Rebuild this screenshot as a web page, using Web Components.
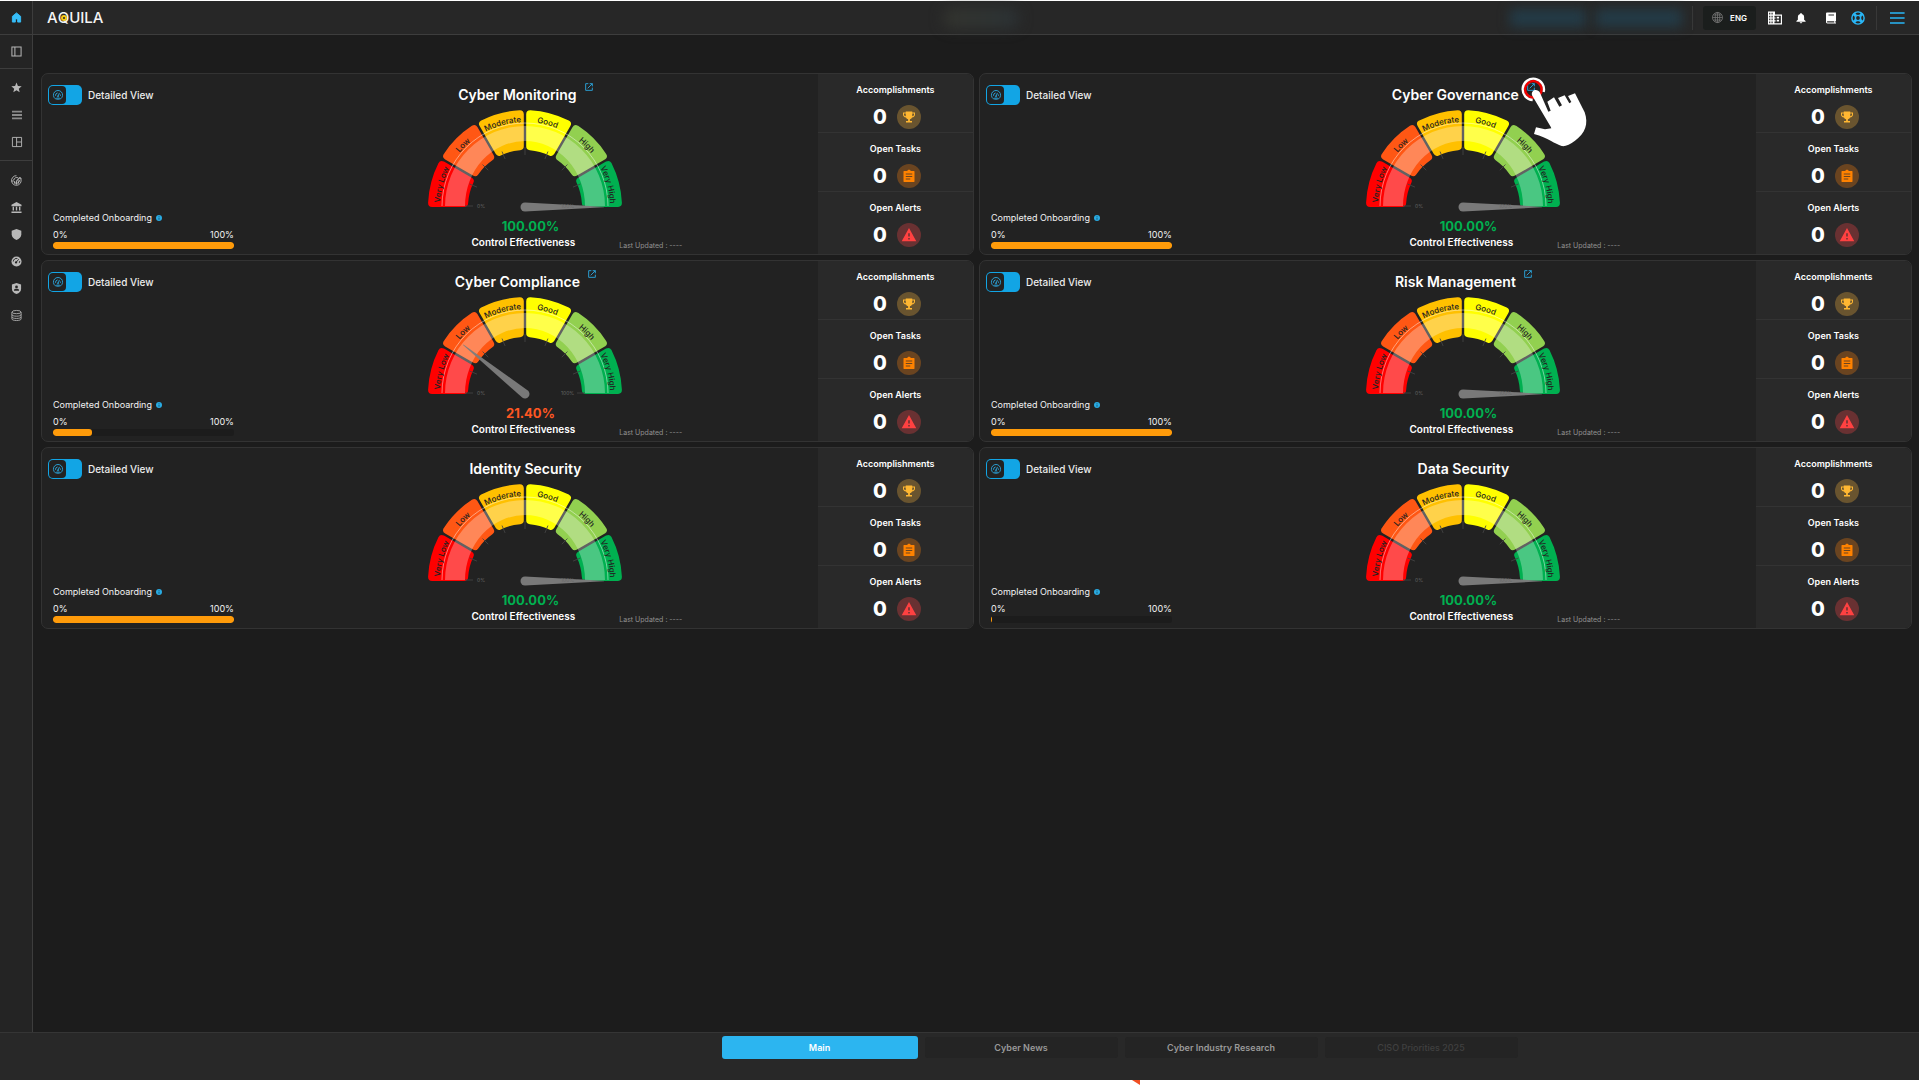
<!DOCTYPE html>
<html lang="en">
<head>
<meta charset="utf-8">
<title>Aquila</title>
<style>
html{background:#fff}
body{margin:0;padding:1px 0 5px;box-sizing:border-box;height:100vh;display:flex;flex-direction:column;font-family:Inter,"Open Sans",sans-serif;color:#fff;overflow:hidden;position:relative}
.shell{flex:1;display:flex;min-height:0;background:#1c1c1c}
.page{flex:1;display:flex;flex-direction:column;min-width:0}
main{flex:1;display:grid;grid-template-columns:1fr 1fr;gap:5px;align-content:start;padding:38px 7px 0 8px}
</style>
</head>
<body>
<div class="shell">
  <app-sidebar></app-sidebar>
  <div class="page">
    <app-header></app-header>
    <main>
      <score-card name="Cyber Monitoring" score="100" onboarding="100" link></score-card>
      <score-card name="Cyber Governance" score="100" onboarding="100" link><pointer-hand slot="pointer"></pointer-hand></score-card>
      <score-card name="Cyber Compliance" score="21.4" onboarding="21.4" link></score-card>
      <score-card name="Risk Management" score="100" onboarding="100" link></score-card>
      <score-card name="Identity Security" score="100" onboarding="100"></score-card>
      <score-card name="Data Security" score="100" onboarding="0.4"></score-card>
    </main>
  </div>
</div>
<tab-bar></tab-bar>
<script>
const ICONS = {
  home: '<path fill="currentColor" d="M12 2 3 9.500V22h6.500v-7h5v7H21V9.500z" stroke="currentColor" stroke-width="2" stroke-linejoin="round"/>',
  panel: '<path fill="none" stroke="currentColor" stroke-width="2.200" d="M2 2h20v20H2zM8.500 2v20"/>',
  star: '<path fill="currentColor" d="m12 1 3.100 7.600 8.200.6-6.300 5.300 2 8L12 18.100 5 22.500l2-8L.7 9.200l8.200-.6z"/>',
  rows: '<path stroke="currentColor" stroke-width="4.500" d="M0 4h24M0 12h24M0 20h24"/>',
  layout: '<path fill="none" stroke="currentColor" stroke-width="2.200" d="M1 1h22v22H1zM11 1v22M11 12h11"/>',
  radar: '<g fill="none" stroke="currentColor" stroke-width="2"><path d="M19 4.500A10.500 10.500 0 1 1 12 1.500M2 15l4-5M22.300 9a10.500 10.500 0 0 0-1.500-3M16 6.500a6.500 6.500 0 0 0-10 4.500M18.500 11a6.500 6.500 0 0 1-12.500 3"/><path d="m12 13 8-8" stroke-width="2.500"/><path d="M8 13v6M12 13v8M16 12v7"/></g>',
  bank: '<path fill="currentColor" d="M12 0 1 6v3h22V6zM3.500 10.500h3v8h-3zM10.500 10.500h3v8h-3zM17.500 10.500h3v8h-3zM1 20.500h22V24H1z"/>',
  shield: '<path fill="currentColor" d="M12 0 1.500 4v8c0 5.500 4.500 10 10.500 12 6-2 10.500-6.500 10.500-12V4z"/>',
  speed: '<circle cx="12" cy="12" r="11" fill="currentColor"/><path fill="none" stroke="#242424" stroke-width="2" d="M5 12a7 7 0 0 1 9-6.500M19 11a7 7 0 0 1-1 4M11 14l6-7"/><circle cx="11" cy="14" r="2.500" fill="#242424"/>',
  badge: '<path fill="currentColor" d="M12 0 2 3.500V13c0 5 4 9 10 11 6-2 10-6 10-11V3.500z"/><circle cx="12" cy="8.500" r="3" fill="#242424"/><path fill="#242424" d="M6.500 17v-1.500c0-2 3-3 5.500-3s5.500 1 5.500 3V17z"/>',
  db: '<g fill="none" stroke="currentColor" stroke-width="1.800"><ellipse cx="12" cy="4.500" rx="10" ry="3.500"/><path d="M2 4.500v15c0 2 4 3.500 10 3.500s10-1.500 10-3.500v-15M2 10c0 2 4 3.500 10 3.500S22 12 22 10M2 15c0 2 4 3.500 10 3.500S22 17 22 15"/></g>',
  globe: '<g fill="none" stroke="currentColor" stroke-width="1.700"><circle cx="12" cy="12" r="11"/><ellipse cx="12" cy="12" rx="5" ry="11"/><path d="M12 1v22M1 12h22M3 6.500h18M3 17.500h18"/></g>',
  building: '<path fill="currentColor" fill-rule="evenodd" d="M0 1h12v5h12v17H0zM2 3v3h2V3zM6 3v3h2V3zM2 8v3h2V8zM6 8v3h2V8zM2 13v3h2v-3zM6 13v3h2v-3zM2 18v3h2v-3zM6 18v3h2v-3zM11 8v3h2v2h-2v3h2v2h-2v3h11V8zM15 10h4v3h-4zM15 15h4v3h-4z"/>',
  bell: '<path fill="currentColor" d="M12 0c-1.400 0-2 1-2 2.300C6.500 3.200 4.500 6 4.500 10v6L1 19v2h22v-2l-3.500-3v-6c0-4-2-6.800-5.500-7.700C14 1 13.400 0 12 0zM9 22h6c0 1.500-1.500 2.500-3 2.500S9 23.500 9 22z"/>',
  book: '<path fill="currentColor" fill-rule="evenodd" d="M4.500 1H22v17.500h-1.500V21H22v2H5c-2 0-3-1.500-3-3V3.500C2 2 3 1 4.500 1zM7 5v2h11V5zM5 18.500c-1.500 0-1.500 2.500 0 2.500h13.500v-2.500z"/>',
  buoy: '<g fill="none" stroke="currentColor"><circle cx="12" cy="12" r="10.500" stroke-width="2.500"/><circle cx="12" cy="12" r="4.500" stroke-width="2.500"/><path stroke-width="5" d="m4.500 4.500 4 4M19.500 4.500l-4 4M4.500 19.500l4-4M19.500 19.500l-4-4"/></g>',
  menu: '<path stroke="currentColor" stroke-width="2.500" d="M0 3.500h25M0 12h25M0 20.500h25"/>',
  open: '<path fill="none" stroke="currentColor" stroke-width="2.800" d="M10 2H2v20h20v-8M14 2h8v8M22 2 8 16"/>',
  dial: '<g fill="none" stroke="currentColor" stroke-width="2.200"><path d="M5.500 21A11 11 0 1 1 18.500 21Q12 23.500 5.500 21zM6 14a6.500 6.500 0 0 1 5-7M18 14a6.500 6.500 0 0 0-.8-3.500M12 15l3.500-8M8 19.500h8"/><circle cx="12" cy="15" r="1.300"/></g>',
  info: '<circle cx="12" cy="12" r="12" fill="#29abe2"/><path stroke="#17506b" stroke-width="3.500" d="M12 5v3.500M12 11v8"/>',
  trophy: '<path fill="currentColor" fill-rule="evenodd" d="M5.500 1h13v2H24v4c0 3.500-2.500 5.500-6 6-1 2-2.500 3-4.200 3.400V20H18v3H6v-3h4.200v-3.600C8.500 16 7 15 6 13c-3.500-.5-6-2.500-6-6V3h5.500zM2 5v2c0 2 1.500 3.300 3.500 3.700V5zM18.500 5v5.700C20.500 10.300 22 9 22 7V5z"/>',
  tasks: '<path fill="currentColor" fill-rule="evenodd" d="M2 2h6.500c.5-1.500 2-2.500 3.500-2.500s3 1 3.500 2.500H22c.6 0 1 .4 1 1v20c0 .6-.4 1-1 1H2c-.6 0-1-.4-1-1V3c0-.6.4-1 1-1zM5.500 7v2h13V7zM5.500 12v2h13v-2zM5.500 17v2h9v-2z"/>',
  alert: '<path fill="currentColor" fill-rule="evenodd" d="M12 0 24.500 22.500H-.5zM10.700 9v5.500h2.600V9zM10.700 17v2.700h2.600V17z"/>'
};

class AppIcon extends HTMLElement{
  connectedCallback(){
    if(this.shadowRoot) return;
    const s = this.getAttribute('size') || 12;
    this.attachShadow({mode:'open'}).innerHTML =
      `<style>:host{display:block;flex:none;width:${s}px;height:${s}px}svg{display:block;overflow:visible}</style>
       <svg width="${s}" height="${s}" viewBox="0 0 24 24" aria-hidden="true">${ICONS[this.getAttribute('name')]}</svg>`;
  }
}

class AppSidebar extends HTMLElement{
  connectedCallback(){
    const b = (n,l,s=11) => `<button type="button" aria-label="${l}"><app-icon name="${n}" size="${s}"></app-icon></button>`;
    this.attachShadow({mode:'open'}).innerHTML = `<style>
      :host{display:block;flex:none;width:32px;background:#242424;border-right:1px solid #3d3d3d}
      nav{display:flex;flex-direction:column}
      div{display:flex;flex-direction:column;border-bottom:1px solid #3d3d3d}
      .one{padding:3px 0}
      .two{padding:5px 0}
      .last{padding:6px 0;border:0}
      button{all:unset;height:27px;display:flex;align-items:center;justify-content:center;cursor:pointer;padding-left:1px;color:#b8b8b8}
      .home button{color:#36bdf8}
      .dim button:nth-child(2){color:#8a8a8a}
    </style><nav aria-label="Main navigation">
      <div class="one home">${b('home','Home')}</div>
      <div class="one">${b('panel','Toggle panel')}</div>
      <div class="two dim">${b('star','Favorites')}${b('rows','List',10)}${b('layout','Layout',10)}</div>
      <div class="last">${b('radar','Monitoring')}${b('bank','Governance')}${b('shield','Risk')}${b('speed','Compliance')}${b('badge','Identity')}${b('db','Data')}</div>
    </nav>`;
  }
}

class AppHeader extends HTMLElement{
  connectedCallback(){
    this.attachShadow({mode:'open'}).innerHTML = `<style>
      :host{display:flex;align-items:center;height:33px;background:#272727;border-bottom:1px solid #3d3d3d;padding:0 15px 0 14px}
      .logo{display:flex;align-items:center;font-size:15px;font-weight:500;line-height:20px;color:#f4f4f4}
      .q{position:relative}
      .q i{position:absolute;left:3px;top:7px;width:2px;height:2px;border:2px solid #f6c915;background:#222;border-radius:50%}
      .space{flex:1}
      .haze{width:76px;height:20px;margin-right:46px;border-radius:10px;background:linear-gradient(90deg,#34352f,#2c3336);filter:blur(7px)}
      .right{flex:1;display:flex;align-items:center;justify-content:flex-end;color:#fff}
      .veil{width:76px;height:18px;background:#233b47;filter:blur(6px);margin-right:10px}
      .veil.b{width:86px}
      hr{margin:0;border:0;width:1px;height:24px;background:#383838}
      hr.end{margin-left:11px}
      button{all:unset;display:flex;align-items:center;cursor:pointer}
      .lang{height:24px;padding:0 9px;gap:7px;margin:0 12px 0 10px;background:#1b1e1d;border-radius:3px;font-size:8px;font-weight:600;line-height:12px}
      .lang app-icon{color:#777}
      .tools{display:flex;align-items:center;gap:14px}
      .book{margin-left:5px}
      .blue{color:#29b6f6}
      .menu{margin-left:13px}
    </style>
    <span class="logo">A<span class="q">Q<i></i></span>UILA</span>
    <span class="space"></span><span class="haze"></span>
    <div class="right"><span class="veil"></span><span class="veil b"></span><hr>
      <button class="lang" type="button"><app-icon name="globe" size="11"></app-icon>ENG</button>
      <div class="tools">
        <button type="button" aria-label="Organization"><app-icon name="building" size="14"></app-icon></button>
        <button type="button" aria-label="Notifications"><app-icon name="bell" size="10"></app-icon></button>
        <button type="button" class="book" aria-label="Guide"><app-icon name="book" size="12"></app-icon></button>
        <button type="button" class="blue" aria-label="Support"><app-icon name="buoy" size="14"></app-icon></button>
      </div>
      <hr class="end">
      <button type="button" class="blue menu" aria-label="Menu"><app-icon name="menu" size="14"></app-icon></button>
    </div>`;
  }
}

class ViewToggle extends HTMLElement{
  connectedCallback(){
    this.attachShadow({mode:'open'}).innerHTML = `<style>
      :host{display:block}
      label{display:flex;align-items:center;gap:6px;font-size:10px;font-weight:500;line-height:20px;color:#ececec;cursor:pointer;white-space:nowrap}
      .switch{display:grid;flex:none}
      .switch>*{grid-area:1/1}
      input{appearance:none;margin:0;width:34px;height:20px;border-radius:5px;background:#12a5e5}
      .knob{width:17px;height:18px;margin:1px;border-radius:4px;background:#222;color:#2ba5dc;display:flex;align-items:center;justify-content:center;pointer-events:none}
    </style><label><span class="switch"><input type="checkbox" role="switch"><span class="knob"><app-icon name="dial" size="10"></app-icon></span></span><slot></slot></label>`;
  }
}

class OnboardingProgress extends HTMLElement{
  connectedCallback(){
    const v = this.getAttribute('value');
    this.attachShadow({mode:'open'}).innerHTML = `<style>
      :host{display:block;font-size:9px;font-weight:400;line-height:12px;color:#f2f2f2}
      .head{display:flex;align-items:center;gap:4px;margin-bottom:5px;white-space:nowrap}
      .ends{display:flex;justify-content:space-between;margin-bottom:1px}
      .track{height:7px;border-radius:3px;background:#1c1c1c;overflow:hidden}
      .fill{height:7px;width:${v}%;border-radius:3px;background:#ff9b0a}
    </style><div class="head"><slot></slot><app-icon name="info" size="6"></app-icon></div>
    <div class="ends"><span>0%</span><span>100%</span></div>
    <div class="track" role="progressbar" aria-label="Completed Onboarding" aria-valuenow="${v}" aria-valuemin="0" aria-valuemax="100"><div class="fill"></div></div>`;
  }
}

class ScoreGauge extends HTMLElement{
  connectedCallback(){
    const v = +this.getAttribute('value');
    const bands = [['Very Low','#ff0000'],['Low','#ff5714'],['Moderate','#ffc000'],['Good','#ffff00'],['High','#92d050'],['Very High','#00b050']];
    const R = 97, r = 57, c = 4;
    const pt = (rad,a) => `${(-rad*Math.cos(a)).toFixed(2)} ${(-rad*Math.sin(a)).toFixed(2)}`;
    const rot = d => d*Math.PI/180;
    const segs = bands.map(([n,col],i)=>{
      const g0 = c + (i===0?0:1.2), g1 = c + (i===5?0:1.2), o = R-c, q = r+c, a = rot(i*30), b = rot(i*30+30);
      return `<path fill="${col}" stroke="${col}" stroke-width="${c*2}" stroke-linejoin="round" d="M${pt(o,a+Math.asin(g0/o))}A${o} ${o} 0 0 1 ${pt(o,b-Math.asin(g1/o))}L${pt(q,b-Math.asin(g1/q))}A${q} ${q} 0 0 0 ${pt(q,a+Math.asin(g0/q))}Z"/>`;
    }).join('');
    const arcs = bands.map((x,i)=>`<path id="arc${i}" fill="none" d="M${pt(85,rot(i*30-5))}A85 85 0 0 1 ${pt(85,rot(i*30+35))}"/>`).join('');
    const names = bands.map(([n],i)=>`<text class="band" text-anchor="middle"><textPath href="#arc${i}" startOffset="50%">${n}</textPath></text>`).join('');
    let ticks = '';
    for(let i=0;i<=8;i++){ const a = rot(i*22.5); ticks += `<path transform="translate(0 ${i%8===0?-1:0})" d="M${pt(60,a)}L${pt(52,a)}"/>`; }
    this.attachShadow({mode:'open'}).innerHTML = `<style>
      :host{display:block}
      svg{display:block;overflow:visible}
      .band{font-size:8px;font-weight:500;fill:#222}
      .end{font-size:5px;fill:#666}
    </style>
    <svg width="196" height="103" viewBox="-98 -98 196 103" role="img" aria-label="Control effectiveness gauge">
      <defs>${arcs}</defs>${segs}
      <path fill="#fff" fill-opacity=".29" d="M-80 -1A80 80 0 0 1 80 -1L60 -1A60 65 0 0 0 -60 -1Z"/>
      <path fill="none" stroke="#fff" stroke-opacity=".45" d="M-83 -1A83 83 0 0 1 83 -1"/>
      <g stroke="#444" stroke-opacity=".85">${ticks}</g>
      ${names}
      <path fill="#7d7d7d" fill-opacity=".96" transform="rotate(${v*1.8})" d="M0 -4.500L-79 -.3V.3L0 4.500A4.500 4.500 0 0 0 0 -4.500Z"/>
      <text class="end" x="-48" y="1">0%</text><text class="end" x="36" y="1">100%</text>
    </svg>`;
  }
}

class StatTile extends HTMLElement{
  connectedCallback(){
    const icon = this.getAttribute('icon');
    this.attachShadow({mode:'open'}).innerHTML = `<style>
      :host{display:flex;flex-direction:column;align-items:center;padding:10px 0 3px;font-size:9px;font-weight:600;line-height:12px}
      .row{display:flex;align-items:center;gap:10px;margin-top:9px;padding-left:3px}
      b{font-size:20px;font-weight:800;line-height:24px}
      .disc{width:24px;height:24px;border-radius:50%;display:flex;align-items:center;justify-content:center;color:var(--tone);background:var(--disc)}
    </style><slot></slot><div class="row"><b>${this.getAttribute('count')}</b><span class="disc"><app-icon name="${icon}" size="${icon==='alert'?14:12}"></app-icon></span></div>`;
  }
}

class ScoreCard extends HTMLElement{
  connectedCallback(){
    const score = +this.getAttribute('score');
    this.attachShadow({mode:'open'}).innerHTML = `<style>
      :host{display:flex;height:180px;border:1px solid #333;border-radius:7px;background:#222;position:relative}
      .body{flex:5;display:grid;grid-template-columns:1fr 3fr;min-width:0}
      .left{display:flex;flex-direction:column;justify-content:space-between;padding:11px 2px 5px 6px}
      onboarding-progress{margin-left:5px}
      .center{display:flex;flex-direction:column;align-items:center;padding:9px 3px 0 0}
      .title{display:flex;gap:8px;margin-bottom:2px}
      h2{margin:0;font-size:14px;font-weight:600;line-height:24px;white-space:nowrap}
      .title a{color:#2ba5dc;height:8px;position:relative}
      .value{font-size:13px;font-weight:700;line-height:20px;margin-top:4px;padding-left:10px}
      .foot{align-self:stretch;display:grid;grid-template-columns:1fr auto 1fr;font-size:10px;font-weight:600;line-height:12px;white-space:nowrap;padding-right:4px}
      .foot span:first-child{grid-column:2}
      .foot .upd{margin:5px 0 0 44px;font-size:7px;font-weight:400;line-height:10px;color:#909090}
      .stats{flex:1;display:flex;flex-direction:column;background:#292929;border-radius:0 6px 6px 0}
      stat-tile+stat-tile{border-top:1px solid #333}
    </style>
    <div class="body">
      <div class="left"><view-toggle>Detailed View</view-toggle>
        <onboarding-progress value="${this.getAttribute('onboarding')}">Completed Onboarding</onboarding-progress></div>
      <div class="center">
        <div class="title"><h2>${this.getAttribute('name')}</h2>${this.hasAttribute('link')?'<a href="#" aria-label="Open"><app-icon name="open" size="8"></app-icon><slot name="pointer"></slot></a>':''}</div>
        <score-gauge value="${score}"></score-gauge>
        <div class="value" style="color:${score>=80?'#00b050':'#ff5722'}">${score.toFixed(2)}%</div>
        <div class="foot"><span>Control Effectiveness</span><span class="upd">Last Updated : ----</span></div>
      </div>
    </div>
    <div class="stats">
      <stat-tile count="0" icon="trophy" style="--tone:#ffb732;--disc:#69542f">Accomplishments</stat-tile>
      <stat-tile count="0" icon="tasks" style="--tone:#ff8200;--disc:#6a4420">Open Tasks</stat-tile>
      <stat-tile count="0" icon="alert" style="--tone:#ff4141;--disc:#693132">Open Alerts</stat-tile>
    </div>`;
  }
}

class PointerHand extends HTMLElement{
  connectedCallback(){
    this.attachShadow({mode:'open'}).innerHTML = `<style>
      :host{position:absolute;left:-6px;top:-6px;z-index:2;pointer-events:none}
      svg{display:block}
    </style><svg width="68" height="72" viewBox="123 229 204 216" aria-hidden="true">
      <circle cx="160" cy="266" r="25" fill="none" stroke="#e00" stroke-width="8"/>
      <path fill="none" stroke="#fff" stroke-width="7" d="M158 298A32 32 0 1 1 191 274"/>
      <path fill="#fff" d="M156 284C152 268 172 262 180 276L205 333 212 330 202 303 222 290 238 318 246 314 234 292 254 284 268 308 274 304 264 286 285 278 314 335C326 370 316 398 285 420 270 432 255 438 245 436 225 430 205 412 162 400L168 380 195 386 214 383 212 378Z"/>
    </svg>`;
  }
}

class TabBar extends HTMLElement{
  connectedCallback(){
    this.attachShadow({mode:'open'}).innerHTML = `<style>
      :host{display:block;flex:none;height:47px;background:#282828;border-top:1px solid #353535;position:relative}
      div{display:flex;align-items:center;justify-content:center;gap:7px;padding:3px 0 0 320px}
      button{border:0;margin:0;padding:0;width:193px;height:21px;border-radius:3px;background:#242424;color:#999;font:600 9px/21px Inter,sans-serif;cursor:pointer}
      .on{width:196px;height:23px;background:#2cb5f0;color:#fff}
      button:disabled{color:#404040;font-weight:500}
      svg{position:absolute;left:59%;top:100%}
    </style><div role="tablist">
      <button role="tab" aria-selected="true" class="on">Main</button>
      <button role="tab">Cyber News</button>
      <button role="tab">Cyber Industry Research</button>
      <button role="tab" disabled>CISO Priorities 2025</button>
    </div><svg width="8" height="5" aria-hidden="true"><path fill="#f04e23" d="M0 0H8V5Z"/></svg>`;
  }
}

for (const [tag, cls] of Object.entries({
  'app-icon':AppIcon,'app-sidebar':AppSidebar,'app-header':AppHeader,'view-toggle':ViewToggle,
  'onboarding-progress':OnboardingProgress,'score-gauge':ScoreGauge,'stat-tile':StatTile,
  'pointer-hand':PointerHand,'score-card':ScoreCard,'tab-bar':TabBar
})) customElements.define(tag, cls);
</script>
</body>
</html>
